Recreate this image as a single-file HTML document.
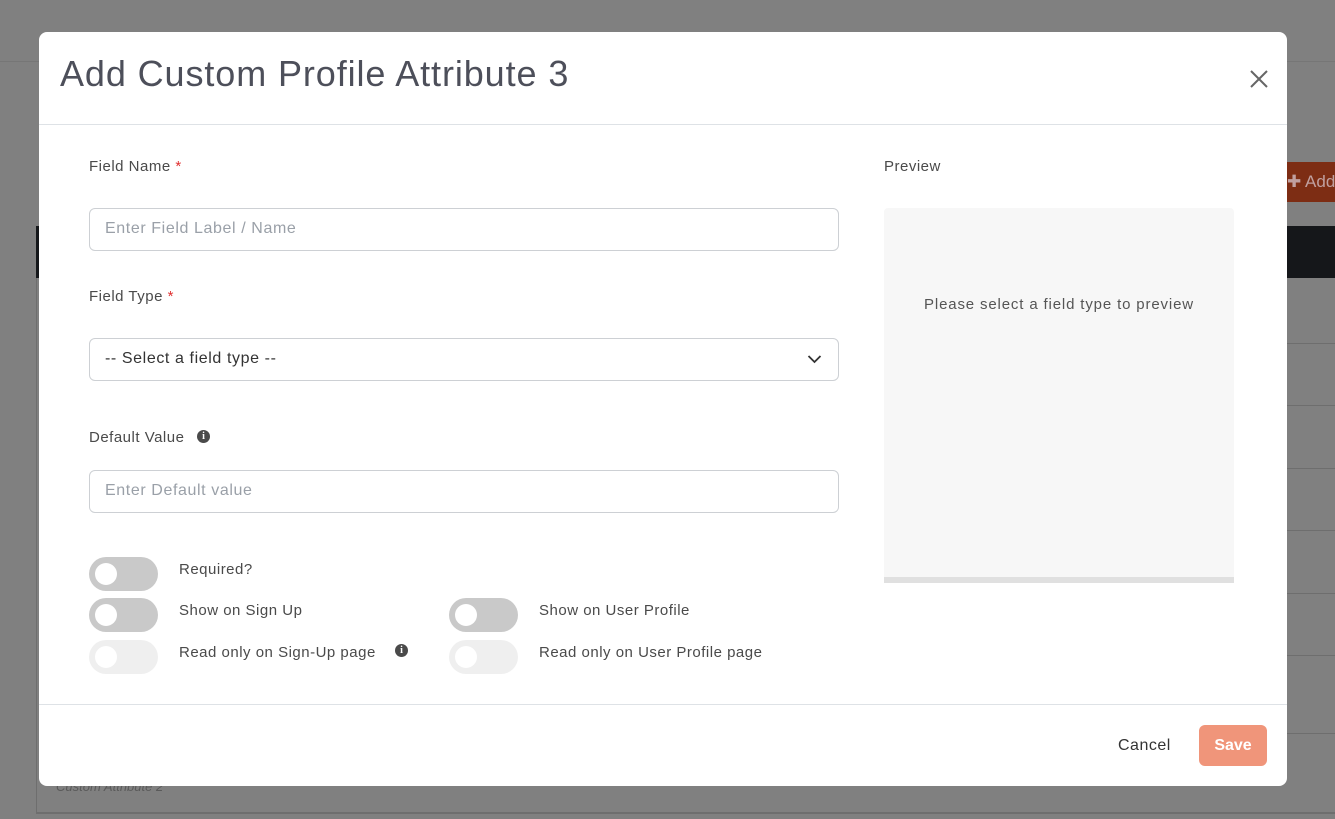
<!DOCTYPE html>
<html><head><style>
*{box-sizing:border-box;margin:0;padding:0}
body{width:1335px;height:819px;background:#808080;font-family:"Liberation Sans",sans-serif;position:relative;overflow:hidden}
.abs{position:absolute;white-space:nowrap}
.modal{left:39px;top:32px;width:1248px;height:754px;background:#fff;border-radius:8px}
.title{left:21px;top:21px;font-size:36px;color:#4d4f5a;letter-spacing:0.9px}
.lbl{font-size:15px;color:#4a4a4a;letter-spacing:0.5px}
.req{color:#e03030}
.inp{border:1px solid #cdd0d4;border-radius:6px;height:43px;width:750px;left:50px;padding:11px 15px;font-size:16px;color:#9aa0a8;letter-spacing:0.6px}
.tog{width:69px;height:34px;border-radius:17px;background:#c9c9c9}
.tog::after{content:"";position:absolute;left:6px;top:6px;width:22px;height:22px;border-radius:50%;background:#fff}
.tog.dis{background:#efefef}
.info{width:13px;height:13px;border-radius:50%;background:#4a4a4a;color:#fff;font-size:10px;font-weight:bold;text-align:center;line-height:13px;font-family:"Liberation Serif",serif}
</style></head><body>
<div class="abs" style="left:0;top:61px;width:1335px;height:1px;background:#767676"></div>
<div class="abs" style="left:36px;top:226px;width:1299px;height:52px;background:#15171a"></div>
<div class="abs" style="left:1283px;top:162px;width:52px;height:40px;background:#7d2d14;border-radius:4px 0 0 4px;color:#c0a0a0;font-size:17px;padding:10px 4px">✚ Add</div>
<div class="abs" style="left:36px;top:278px;width:1px;height:536px;background:#6e6e6e"></div>
<div class="abs" style="left:36px;top:812px;width:1299px;height:2px;background:#6e6e6e"></div>
<div class="abs" style="left:1287px;top:343px;width:48px;height:1px;background:#6e6e6e"></div>
<div class="abs" style="left:1287px;top:405px;width:48px;height:1px;background:#6e6e6e"></div>
<div class="abs" style="left:1287px;top:468px;width:48px;height:1px;background:#6e6e6e"></div>
<div class="abs" style="left:1287px;top:530px;width:48px;height:1px;background:#6e6e6e"></div>
<div class="abs" style="left:1287px;top:593px;width:48px;height:1px;background:#6e6e6e"></div>
<div class="abs" style="left:1287px;top:655px;width:48px;height:1px;background:#6e6e6e"></div>
<div class="abs" style="left:1287px;top:733px;width:48px;height:1px;background:#6e6e6e"></div>
<div class="abs" style="left:56px;top:779px;font-size:13px;font-style:italic;color:#5a5a5a">Custom Attribute 2</div>

<div class="abs modal">
<div class="abs title">Add Custom Profile Attribute 3</div>
<svg class="abs" style="left:1210px;top:37px" width="20" height="20" viewBox="0 0 20 20"><path d="M2 2L18 18M18 2L2 18" stroke="#666" stroke-width="2"/></svg>
<div class="abs" style="left:0;top:92px;width:1248px;height:1px;background:#dee2e6"></div>

<div class="abs lbl" style="left:50px;top:126px">Field Name <span class="req">*</span></div>
<div class="abs inp" style="top:176px">Enter Field Label / Name</div>
<div class="abs lbl" style="left:50px;top:256px">Field Type <span class="req">*</span></div>
<div class="abs inp" style="top:306px;color:#333">-- Select a field type --
<svg class="abs" style="right:16px;top:15px" width="15" height="10" viewBox="0 0 15 10"><path d="M1.5 2L7.5 8L13.5 2" fill="none" stroke="#333" stroke-width="1.8"/></svg></div>
<div class="abs lbl" style="left:50px;top:397px">Default Value</div>
<div class="abs info" style="left:158px;top:398px">i</div>
<div class="abs inp" style="top:438px">Enter Default value</div>

<div class="abs tog" style="left:50px;top:525px"></div>
<div class="abs lbl" style="left:140px;top:529px">Required?</div>
<div class="abs tog" style="left:50px;top:566px"></div>
<div class="abs lbl" style="left:140px;top:570px">Show on Sign Up</div>
<div class="abs tog dis" style="left:50px;top:608px"></div>
<div class="abs lbl" style="left:140px;top:612px">Read only on Sign-Up page</div>
<div class="abs info" style="left:356px;top:612px">i</div>
<div class="abs tog" style="left:410px;top:566px"></div>
<div class="abs lbl" style="left:500px;top:570px">Show on User Profile</div>
<div class="abs tog dis" style="left:410px;top:608px"></div>
<div class="abs lbl" style="left:500px;top:612px">Read only on User Profile page</div>

<div class="abs lbl" style="left:845px;top:126px">Preview</div>
<div class="abs" style="left:845px;top:176px;width:350px;height:375px;background:#f7f7f7;border-radius:4px 4px 0 0;border-bottom:6px solid #e0e0e0"></div>
<div class="abs lbl" style="left:845px;top:264px;width:350px;text-align:center;color:#555;letter-spacing:0.85px">Please select a field type to preview</div>

<div class="abs" style="left:0;top:672px;width:1248px;height:1px;background:#dee2e6"></div>
<div class="abs" style="left:1079px;top:705px;font-size:16px;color:#333;letter-spacing:0.5px">Cancel</div>
<div class="abs" style="left:1160px;top:693px;width:68px;height:41px;background:#f0957a;border-radius:6px;color:#fff;font-size:16px;font-weight:bold;text-align:center;line-height:41px">Save</div>
</div>
</body></html>
